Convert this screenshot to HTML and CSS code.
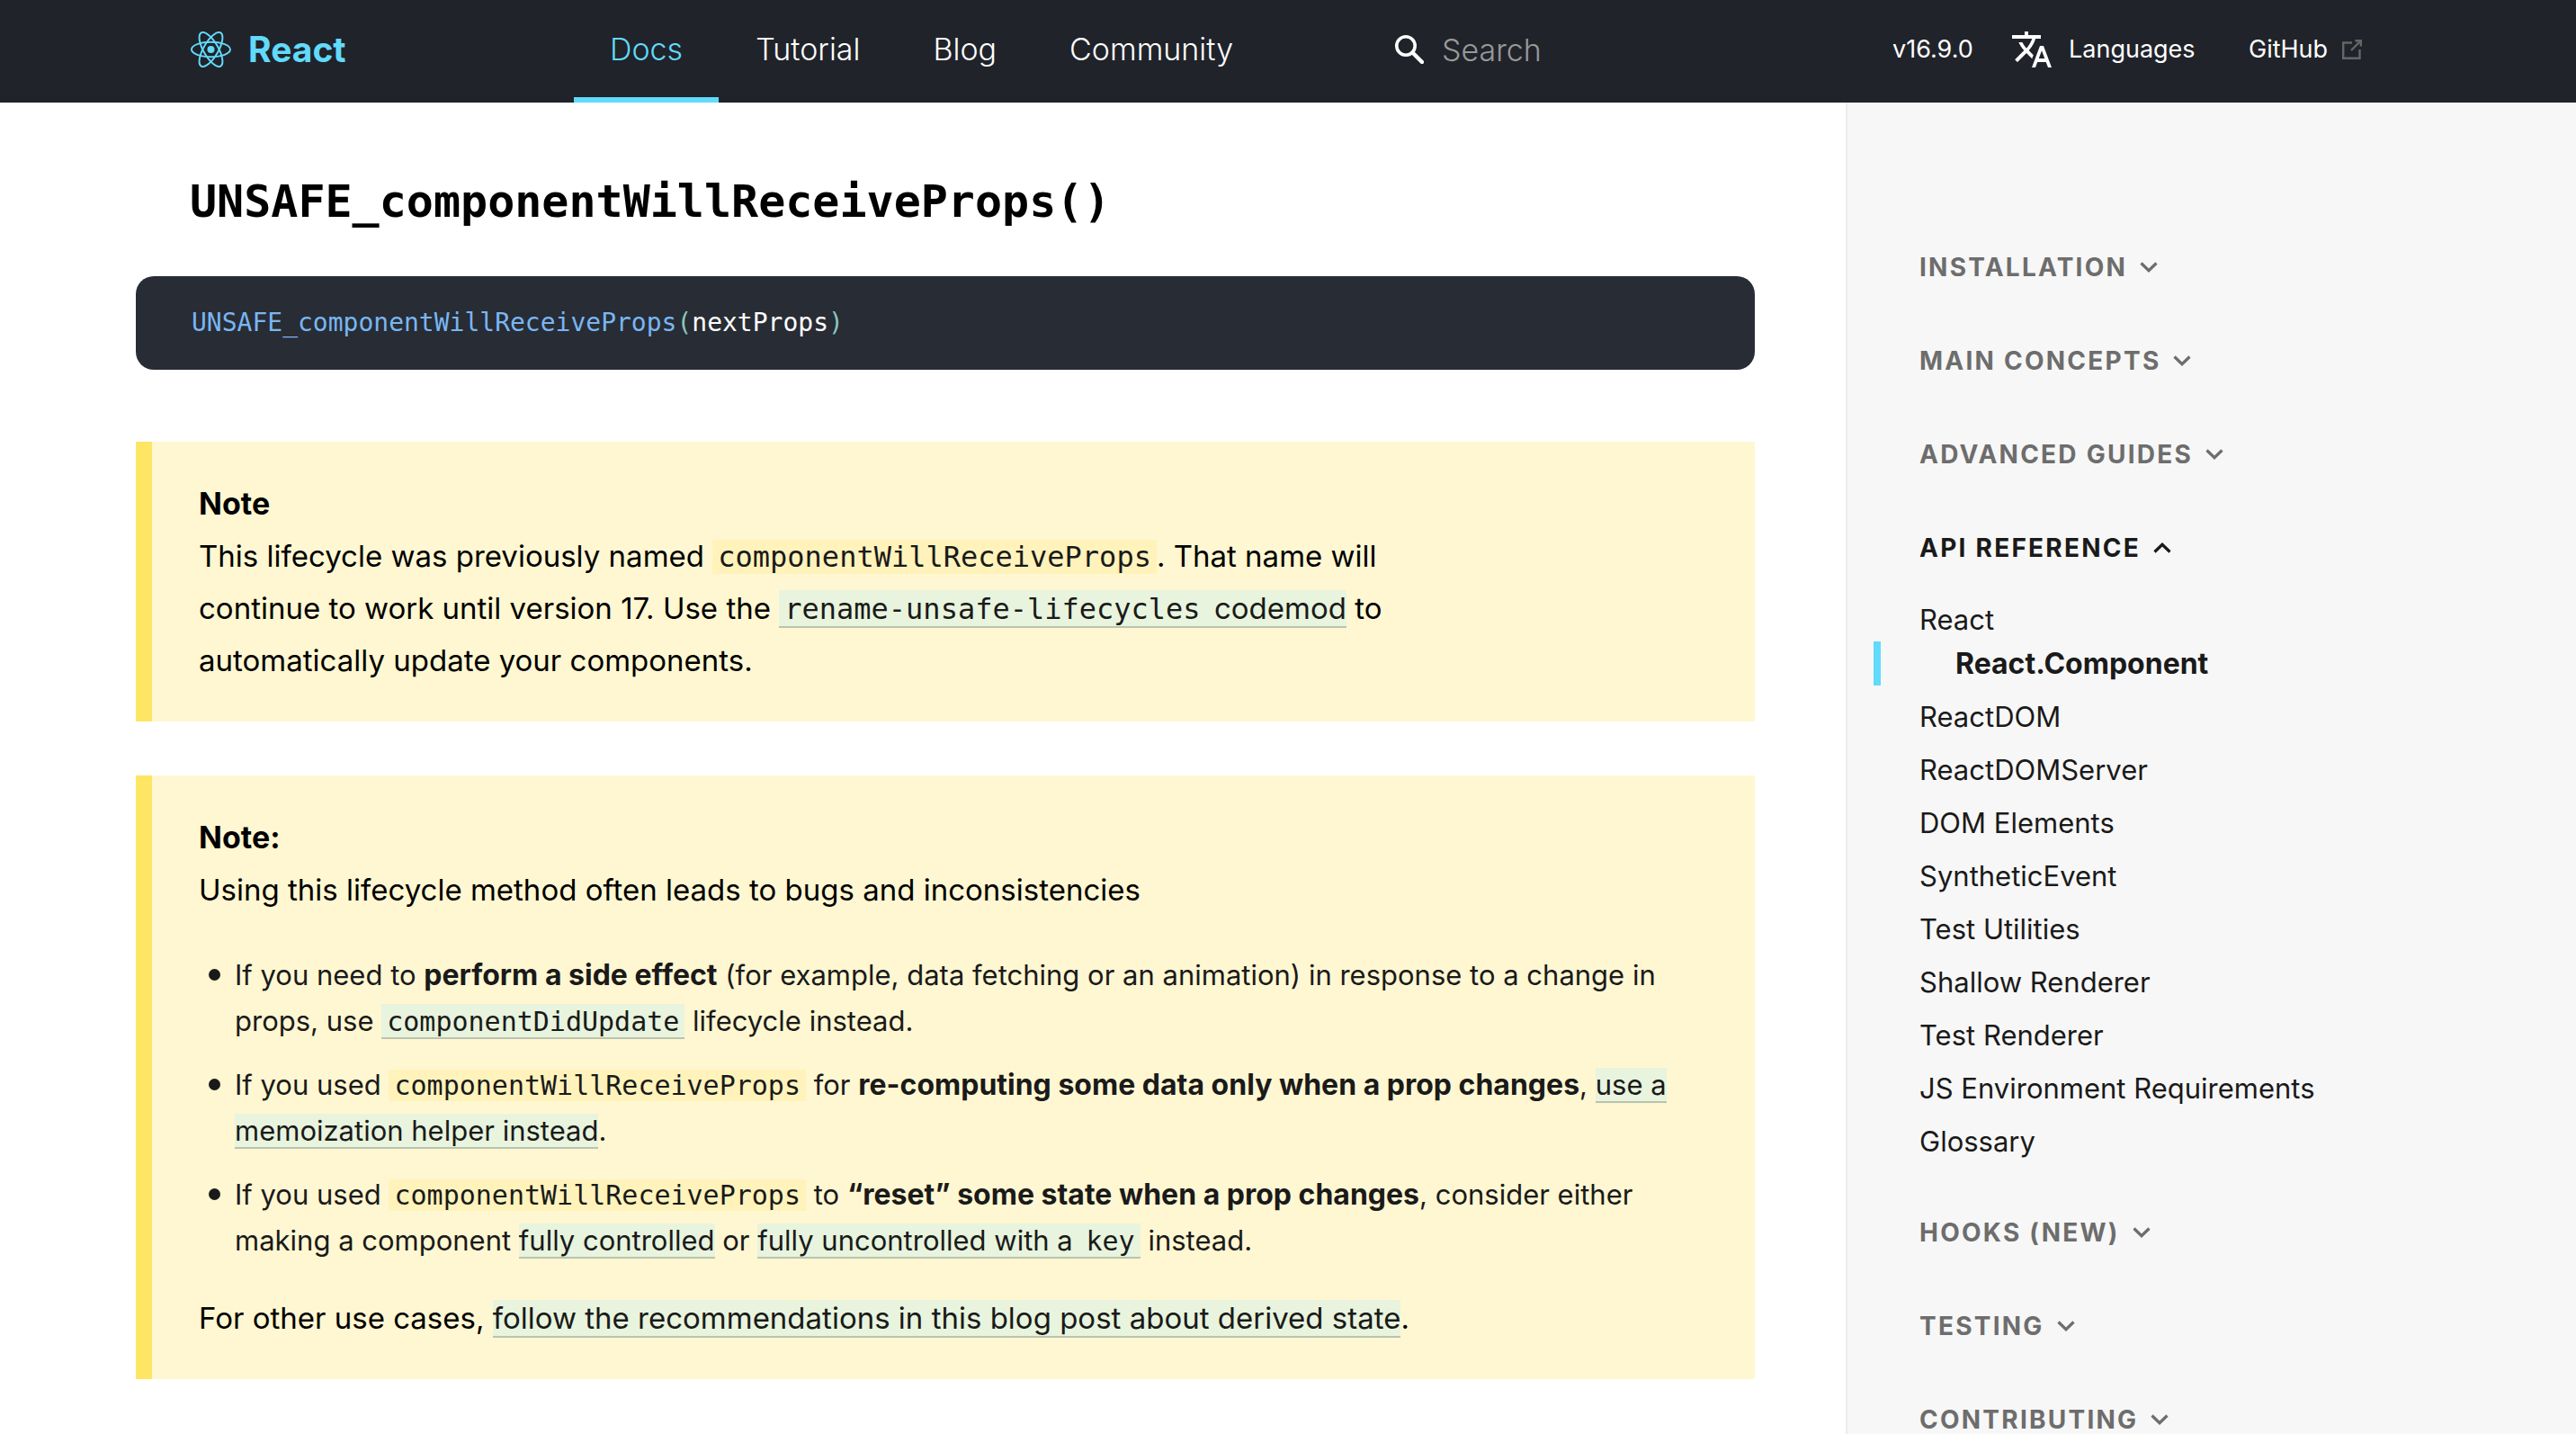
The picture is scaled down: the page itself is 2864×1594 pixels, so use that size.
FILE: index.html
```html
<!DOCTYPE html>
<html lang="en">
<head>
<meta charset="utf-8">
<title>React.Component – React</title>
<link rel="stylesheet" href="styles.css">
</head>
<body>
<svg class="defs" aria-hidden="true">
  <symbol id="chevron" viewBox="0 0 20 12"><path d="M1.5 1.5 10 9.7 18.5 1.5" fill="none" stroke="currentColor" stroke-width="3.2"/></symbol>
</svg>
<header class="header">
  <div class="header-inner">
    <a class="logo" href="#">
      <svg class="logo-mark" viewBox="-11.5 -10.23 23 20.46" aria-hidden="true">
        <circle r="2.05" fill="currentColor"/>
        <g fill="none" stroke="currentColor">
          <ellipse rx="11" ry="4.2"/>
          <ellipse rx="11" ry="4.2" transform="rotate(60)"/>
          <ellipse rx="11" ry="4.2" transform="rotate(120)"/>
        </g>
      </svg>
      <span>React</span>
    </a>
    <nav class="nav">
      <a class="nav-link active" href="#">Docs</a>
      <a class="nav-link" href="#">Tutorial</a>
      <a class="nav-link" href="#">Blog</a>
      <a class="nav-link" href="#">Community</a>
    </nav>
    <label class="search">
      <svg class="search-icon" viewBox="0 0 32 32" aria-hidden="true"><g fill="none" stroke="#fff"><circle cx="12" cy="12" r="10.2" stroke-width="3.6"/><path d="M19.5 19.5 30 30" stroke-width="4.4" stroke-linecap="round"/></g></svg>
      <input class="search-input" type="search" placeholder="Search" aria-label="Search docs">
    </label>
    <div class="tools">
      <a class="version" href="#">v16.9.0</a>
      <a class="languages" href="#">
        <svg class="translate" viewBox="0 0 24 24" aria-hidden="true"><path fill="currentColor" d="M12.87 15.07l-2.54-2.51.03-.03c1.74-1.94 2.98-4.17 3.71-6.53H17V4h-7V2H8v2H1v1.99h11.17C11.5 7.92 10.44 9.75 9 11.35 8.07 10.32 7.3 9.19 6.69 8h-2c.73 1.63 1.73 3.17 2.98 4.56l-5.09 5.02L4 19l5-5 3.11 3.11.76-2.04zM18.5 10h-2L12 22h2l1.12-3h4.75L21 22h2l-4.5-12zm-2.62 7l1.62-4.33L19.12 17h-3.24z"/></svg>
        <span>Languages</span>
      </a>
      <a class="github" href="#">
        <span>GitHub</span>
        <svg class="external" viewBox="0 0 22 22" aria-hidden="true"><g fill="none" stroke="currentColor" stroke-width="2.4"><path d="M11 3.5H1.2V20.8H19.5V11"/><path d="M10 12 19.5 2.5M14.5 1.2H20.8V7.5"/></g></svg>
      </a>
    </div>
  </div>
</header>
<div class="layout">
  <main class="content">
    <h3 class="title"><code>UNSAFE_componentWillReceiveProps()</code></h3>
    <pre class="snippet"><code><span class="fn">UNSAFE_componentWillReceiveProps</span><span class="punct">(</span>nextProps<span class="punct">)</span></code></pre>

    <blockquote class="note">
      <p><strong>Note</strong></p>
      <p>This lifecycle was previously named <code>componentWillReceiveProps</code>. That name will continue to work until version 17. Use the <a href="#"><code>rename-unsafe-lifecycles</code> codemod</a> to automatically update your components.</p>
    </blockquote>

    <blockquote class="note">
      <p><strong>Note:</strong></p>
      <p>Using this lifecycle method often leads to bugs and inconsistencies</p>
      <ul>
        <li>If you need to <strong>perform a side effect</strong> (for example, data fetching or an animation) in response to a change in props, use <a href="#"><code>componentDidUpdate</code></a> lifecycle instead.</li>
        <li>If you used <code>componentWillReceiveProps</code> for <strong>re-computing some data only when a prop changes</strong>, <a href="#">use a memoization helper instead</a>.</li>
        <li>If you used <code>componentWillReceiveProps</code> to <strong>“reset” some state when a prop changes</strong>, consider either making a component <a href="#">fully controlled</a> or <a href="#">fully uncontrolled with a <code>key</code></a> instead.</li>
      </ul>
      <p>For other use cases, <a href="#">follow the recommendations in this blog post about derived state</a>.</p>
    </blockquote>
  </main>
  <nav class="sidebar" aria-label="Documentation">
    <button class="section" type="button">Installation<svg class="chevron"><use href="#chevron"/></svg></button>
    <button class="section" type="button">Main Concepts<svg class="chevron"><use href="#chevron"/></svg></button>
    <button class="section" type="button">Advanced Guides<svg class="chevron"><use href="#chevron"/></svg></button>
    <button class="section open" type="button" aria-expanded="true">API Reference<svg class="chevron"><use href="#chevron"/></svg></button>
    <ul class="pages">
      <li><a href="#">React</a>
        <ul class="subpages"><li><a class="current" href="#">React.Component</a></li></ul>
      </li>
      <li><a href="#">ReactDOM</a></li>
      <li><a href="#">ReactDOMServer</a></li>
      <li><a href="#">DOM Elements</a></li>
      <li><a href="#">SyntheticEvent</a></li>
      <li><a href="#">Test Utilities</a></li>
      <li><a href="#">Shallow Renderer</a></li>
      <li><a href="#">Test Renderer</a></li>
      <li><a href="#">JS Environment Requirements</a></li>
      <li><a href="#">Glossary</a></li>
    </ul>
    <button class="section" type="button">Hooks (New)<svg class="chevron"><use href="#chevron"/></svg></button>
    <button class="section" type="button">Testing<svg class="chevron"><use href="#chevron"/></svg></button>
    <button class="section" type="button">Contributing<svg class="chevron"><use href="#chevron"/></svg></button>
  </nav>
</div>
</body>
</html>
```
FILE: styles.css
```css
* { box-sizing: border-box; }

body {
  margin: 0;
  background: #fff;
  color: #000;
  font-family: Inter, "Liberation Sans", sans-serif;
  font-size: 33px;
  line-height: 58px;
}

a { color: inherit; text-decoration: none; }
code, .title, .snippet { font-family: "DejaVu Sans Mono", "Liberation Mono", monospace; }
p, ul, h3, pre, blockquote { margin: 0; padding: 0; }
.defs { display: none; }

/* Header */
.header { background: #20232a; color: #fff; }
.header-inner {
  display: flex;
  align-items: center;
  max-width: 2520px;
  height: 114px;
  margin: 0 auto;
  padding: 0 40px 4px;
}
.logo {
  display: flex;
  align-items: center;
  flex: 0 0 426px;
  gap: 19px;
  color: #61dafb;
  font-size: 39px;
  font-weight: 700;
}
.logo-mark { width: 45px; height: 40px; }
.nav {
  display: flex;
  align-self: stretch;
  gap: 1px;
  margin-bottom: -4px;
  font-size: 34px;
  font-weight: 300;
}
.nav-link {
  display: flex;
  align-items: center;
  padding: 2px 40px 0;
  border-bottom: 6px solid transparent;
}
.nav-link.active { color: #61dafb; border-bottom-color: #61dafb; }
.search {
  display: flex;
  align-items: center;
  flex: 0 0 553px;
  gap: 20px;
  min-width: 0;
  margin-left: auto;
}
.search-icon { flex: none; width: 32px; height: 32px; }
.search-input {
  flex: 1;
  min-width: 0;
  padding: 0;
  border: 0;
  outline: 0;
  background: none;
  color: #fff;
  font: 300 34px Inter, "Liberation Sans", sans-serif;
}
.search-input::placeholder { color: #999; opacity: 1; }
.tools { display: flex; align-items: center; flex: 0 0 548px; font-size: 27px; }
.version { flex: 0 0 131px; }
.languages { display: flex; align-items: center; gap: 17px; flex: 0 0 265px; }
.translate { width: 48px; height: 48px; }
.github { display: flex; align-items: center; gap: 16px; }
.external { width: 22px; height: 22px; color: #666; }

/* Page */
.layout {
  display: grid;
  grid-template-columns: minmax(0, 1fr) 812px;
  min-height: calc(100vh - 114px);
}
.content { padding: 76px 101px 0 151px; }
.title { padding-left: 60px; font-size: 50px; line-height: 68px; }
.snippet {
  margin: 49px 0 80px;
  padding: 26px 62px;
  border-radius: 20px;
  background: #282c34;
  color: #fff;
  font-size: 28px;
  line-height: 52px;
}
.fn { color: #79b6f2; }
.punct { color: #88c6be; }

/* Notes */
.note {
  margin-bottom: 60px;
  padding: 40px 52px 39px;
  border-left: 18px solid #ffe564;
  background: #fff7d1;
}
.note p { max-width: 1428px; }
.note strong { font-size: 34px; font-weight: 700; line-height: 1; }
.note code {
  padding: 0 6px;
  background: rgba(255, 229, 100, 0.2);
  color: #1a1a1a;
  font-size: 32px;
  line-height: 1;
}
.note a {
  border-bottom: 2px solid rgba(0, 0, 0, 0.2);
  background: #e8f4dd;
  color: #1a1a1a;
}
.note a code { background: none; }
.note ul {
  margin: 40px 0 32px;
  padding-left: 40px;
  color: #1a1a1a;
  font-size: 31px;
  line-height: 51px;
  list-style: none;
}
.note li::before {
  content: "";
  display: inline-block;
  width: 13px;
  height: 13px;
  margin: 0 16px 0 -29px;
  border-radius: 50%;
  background: currentColor;
  vertical-align: 5px;
}
.note li + li { margin-top: 20px; }
.note li code { font-size: 30px; }
.note li strong { font-size: 32px; }

/* Sidebar */
.sidebar {
  padding: 166px 0 0 80px;
  border-left: 2px solid #ececec;
  background: #f7f7f7;
  color: #1a1a1a;
  overflow: hidden;
}
.section {
  display: flex;
  align-items: center;
  gap: 14px;
  margin: 0 0 70px;
  padding: 0;
  border: 0;
  background: none;
  color: #6d6d6d;
  font: 700 28px/34px Inter, "Liberation Sans", sans-serif;
  letter-spacing: 0.08em;
  text-transform: uppercase;
}
.chevron { width: 20px; height: 12px; }
.section.open { margin-bottom: 38px; color: #1a1a1a; }
.section.open .chevron { transform: rotate(180deg); }
.pages { margin-bottom: 60px; list-style: none; font-size: 31px; line-height: 49px; }
.pages > li { margin-bottom: 10px; }
.pages a { display: block; }
.subpages { list-style: none; }
.pages .current {
  margin-left: -51px;
  padding-left: 83px;
  border-left: 8px solid #61dafb;
  font-size: 32px;
  font-weight: 700;
}
```
